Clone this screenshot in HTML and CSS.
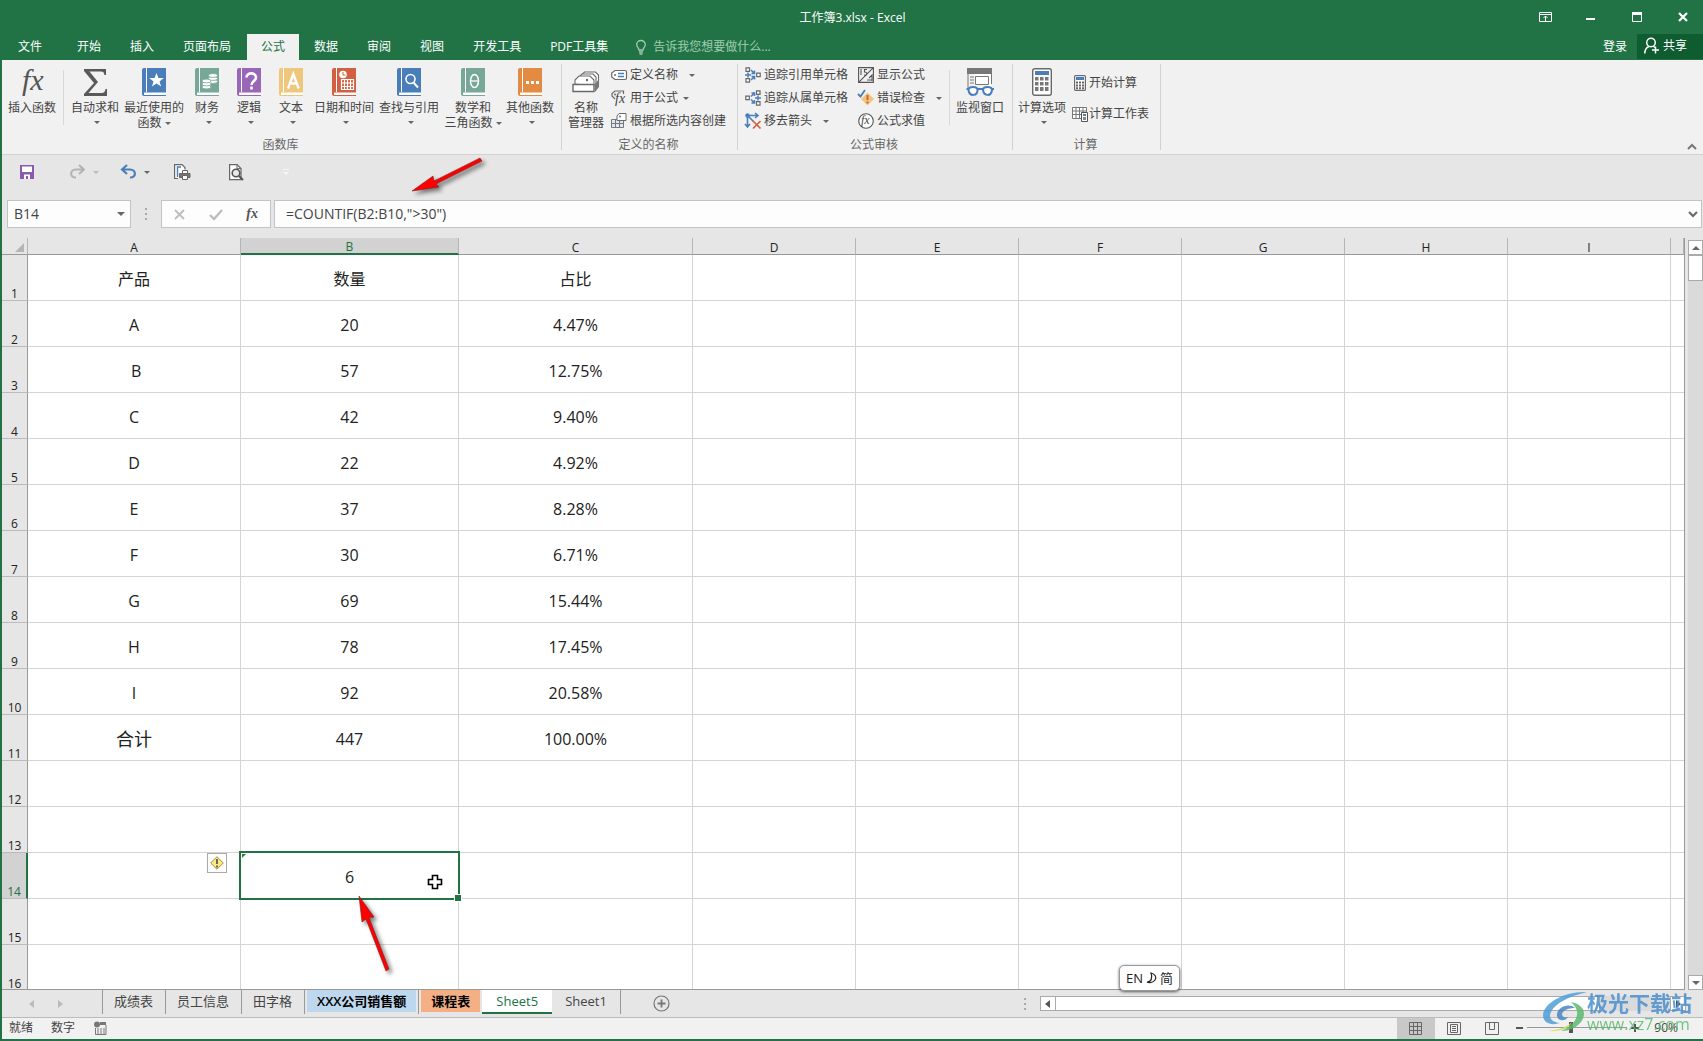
FILE: index.html
```html
<!DOCTYPE html>
<html lang="zh-CN">
<head>
<meta charset="utf-8">
<title>工作簿3.xlsx - Excel</title>
<link rel="stylesheet" href="styles.css">
</head>
<body>
<svg class="defs" width="0" height="0" aria-hidden="true">
  <defs>
    <symbol id="arrow-left-down" viewBox="0 0 76 40">
      <path d="M2 36L23 21L24 26L70 3L72 6L26 29L29 32Z" fill="#f00" stroke="#7a2020" stroke-width=".6"/>
    </symbol>
  </defs>
</svg>
<div class="window">
  <header class="titlebar">
    <span></span>
    <h1 class="title">工作簿3.xlsx - Excel</h1>
    <div class="win-buttons">
      <button class="win-btn" aria-label="功能区显示选项"><svg width="13" height="10"><path d="M.5.5h12v9H.5zM1 2.5h11M6.500 9V4M4.500 6l2-2 2 2" fill="none" stroke="#fff"/></svg></button>
      <button class="win-btn" aria-label="最小化"><svg width="10" height="10"><path d="M0 6h9v2H0z" fill="#fff"/></svg></button>
      <button class="win-btn" aria-label="最大化"><svg width="10" height="10"><path d="M.5.5h9v9h-9z" fill="none" stroke="#fff"/><path d="M0 0h10v3H0z" fill="#fff"/></svg></button>
      <button class="win-btn" aria-label="关闭"><svg width="10" height="10"><path d="M1 1l8 8M9 1l-8 8" stroke="#fff" stroke-width="2.200"/></svg></button>
    </div>
  </header>

  <nav class="tabs">
    <button class="tab tab-file">文件</button>
    <button class="tab">开始</button>
    <button class="tab">插入</button>
    <button class="tab">页面布局</button>
    <button class="tab tab-active">公式</button>
    <button class="tab">数据</button>
    <button class="tab">审阅</button>
    <button class="tab">视图</button>
    <button class="tab">开发工具</button>
    <button class="tab">PDF工具集</button>
    <button class="tab tell-me"><svg width="10" height="15"><path d="M3 10C3 8 .7 7 .7 4.500a4.300 4 0 0 1 8.600 0C9.300 7 7 8 7 10zM3 12h4M3.500 14h3" fill="none" stroke="#a0cdb0" stroke-width="1.300"/></svg>告诉我您想要做什么...</button>
    <span class="grow"></span>
    <button class="tab sign-in">登录</button>
    <button class="tab share"><svg width="15" height="17"><circle cx="7" cy="5.500" r="4.300" fill="none" stroke="#fff" stroke-width="1.500"/><path d="M.8 16.500c0-4 1.700-6 4-7M9 9l2 1.500M11.500 9.500v7M8 13h7" fill="none" stroke="#fff" stroke-width="1.500"/></svg>共享</button>
  </nav>

  <section class="ribbon">
    <div class="group">
      <div class="group-body">
        <button class="big w54"><svg width="36" height="30" class="fx-big"><text x="8" y="22" class="fx-text-big">fx</text></svg><span>插入函数</span></button>
        <i class="inner-rule rule-first"></i>
        <button class="big w54"><svg width="28" height="30"><path d="M3 1h22v6h-1.500C23 4 22 3.500 19 3.500H8.500L17 14 7.500 25H20c3 0 4-1 4.500-4H26v7H3v-2l10-11L3 3z" fill="#595959"/></svg><span>自动求和</span><i class="caret"></i></button>
        <button class="big w64"><svg width="24" height="30"><path d="M2 0H24V28H2Q0 28 0 26V2Q0 0 2 0Z" fill="#4a7ebb"/><path d="M4.500 0V24" stroke="#fff"/><path d="M2 24.500H24V27H2Z" fill="#fff"/><path d="M14.500 5l1.900 5.100h5.400l-4.300 3.300 1.600 5.200-4.600-3.200-4.600 3.200 1.600-5.200-4.300-3.300h5.400z" fill="#fff"/></svg><span>最近使用的</span><span>函数 <i class="caret"></i></span></button>
        <button class="big w42"><svg width="24" height="30"><path d="M2 0H24V28H2Q0 28 0 26V2Q0 0 2 0Z" fill="#76a797"/><path d="M4.500 0V24" stroke="#fff"/><path d="M2 24.500H24V27H2Z" fill="#fff"/><g fill="#fff" stroke="#76a797" stroke-width=".8"><ellipse cx="18" cy="13.500" rx="4.500" ry="1.900"/><ellipse cx="18" cy="10.500" rx="4.500" ry="1.900"/><ellipse cx="18" cy="7.500" rx="4.500" ry="1.900"/><ellipse cx="11.500" cy="19" rx="4.500" ry="1.900"/><ellipse cx="11.500" cy="16" rx="4.500" ry="1.900"/><ellipse cx="11.500" cy="13" rx="4.500" ry="1.900"/></g></svg><span>财务</span><i class="caret"></i></button>
        <button class="big w42"><svg width="24" height="30"><path d="M2 0H24V28H2Q0 28 0 26V2Q0 0 2 0Z" fill="#9a66b8"/><path d="M4.500 0V24" stroke="#fff"/><path d="M2 24.500H24V27H2Z" fill="#fff"/><path d="M9.500 9.500C9.500 4 19 4 19 9.500c0 3.500-4.500 3.500-4.500 7.500M14.500 18.500v3" fill="none" stroke="#fff" stroke-width="2.600"/></svg><span>逻辑</span><i class="caret"></i></button>
        <button class="big w42"><svg width="24" height="30"><path d="M2 0H24V28H2Q0 28 0 26V2Q0 0 2 0Z" fill="#efc77c"/><path d="M4.500 0V24" stroke="#fff"/><path d="M2 24.500H24V27H2Z" fill="#fff"/><path d="M9 20.500L14.300 6 19.600 20.500M10.500 15.500h7.500" fill="none" stroke="#fff" stroke-width="2.400"/></svg><span>文本</span><i class="caret"></i></button>
        <button class="big w64"><svg width="24" height="30"><path d="M2 0H24V28H2Q0 28 0 26V2Q0 0 2 0Z" fill="#d35f42"/><path d="M4.500 0V24" stroke="#fff"/><path d="M2 24.500H24V27H2Z" fill="#fff"/><circle cx="11" cy="6.500" r="3.800" fill="#fff"/><path d="M11 4v3h2.500" fill="none" stroke="#d35f42"/><path d="M9.500 11.500h12v10h-12zM9.500 15h12M9.500 18.500h12M12.500 11v10M15.500 11v10M18.500 11v10" fill="none" stroke="#fff" stroke-width="1.200"/></svg><span>日期和时间</span><i class="caret"></i></button>
        <button class="big w66"><svg width="24" height="30"><path d="M2 0H24V28H2Q0 28 0 26V2Q0 0 2 0Z" fill="#4a7ebb"/><path d="M4.500 0V24" stroke="#fff"/><path d="M2 24.500H24V27H2Z" fill="#fff"/><circle cx="13.500" cy="11" r="4.500" fill="none" stroke="#fff" stroke-width="1.600"/><path d="M16.500 14.500l4.500 5" stroke="#fff" stroke-width="2"/></svg><span>查找与引用</span><i class="caret"></i></button>
        <button class="big w62"><svg width="24" height="30"><path d="M2 0H24V28H2Q0 28 0 26V2Q0 0 2 0Z" fill="#76a797"/><path d="M4.500 0V24" stroke="#fff"/><path d="M2 24.500H24V27H2Z" fill="#fff"/><ellipse cx="13.500" cy="13" rx="4" ry="6.500" fill="none" stroke="#fff" stroke-width="1.500"/><path d="M10 13h7" stroke="#fff" stroke-width="1.300"/></svg><span>数学和</span><span>三角函数 <i class="caret"></i></span></button>
        <button class="big w52"><svg width="24" height="30"><path d="M2 0H24V28H2Q0 28 0 26V2Q0 0 2 0Z" fill="#e38b43"/><path d="M4.500 0V24" stroke="#fff"/><path d="M2 24.500H24V27H2Z" fill="#fff"/><path d="M8 13h3v3H8zM13 13h3v3h-3zM18 13h3v3h-3z" fill="#fff"/></svg><span>其他函数</span><i class="caret"></i></button>
      </div>
      <div class="group-label">函数库</div>
    </div>

    <div class="group">
      <div class="group-body">
        <button class="big w42"><svg width="28" height="30"><g fill="#fff" stroke="#6a6a6a" stroke-width="1.100"><path d="M8.500 11V8l4-4h11l3 3v11"/><path d="M6 13V10l4-4h11l3 3v11"/><path d="M3 16v-4l4-4h11l4 4v6z"/><path d="M1 16.500h21v7H1z" stroke-width="1.400"/></g><circle cx="15" cy="12" r="1.200" fill="#6a6a6a"/><path d="M23 16l4-5v8l-4 5z" fill="#777"/></svg><span>名称</span><span>管理器</span></button>
        <div class="stack stack-names">
          <button class="small"><svg width="16" height="16"><path d="M4 3.500h10q1.500 0 1.500 1.500v6q0 1.500-1.500 1.500H4L.7 10V6z" fill="#fff" stroke="#6a6a6a" stroke-width="1.200"/><circle cx="4" cy="8" r="1" fill="#6a6a6a"/><path d="M7 6.500h6M7 9.500h6" stroke="#4a7ebb" stroke-width="1.300"/></svg>定义名称<i class="caret far"></i></button>
          <button class="small"><svg width="16" height="16"><path d="M4 9L1 6V3.500L4 1h8.500v3" fill="none" stroke="#6a6a6a" stroke-width="1.200"/><circle cx="4" cy="4.500" r="1" fill="#6a6a6a"/><text x="4" y="13" class="fx-text fx-bigger">fx</text></svg>用于公式<i class="caret"></i></button>
          <button class="small"><svg width="16" height="16"><path d="M.5 6.500h12v8H.5zM4.500 6v8M8.500 6v8M1 10.500h11" fill="#dce8f4" stroke="#777"/><path d="M6 3l2-2.500h7v7H6z" fill="#fff" stroke="#6a6a6a"/><circle cx="9" cy="3.500" r="1" fill="#6a6a6a"/></svg>根据所选内容创建</button>
        </div>
      </div>
      <div class="group-label">定义的名称</div>
    </div>

    <div class="group">
      <div class="group-body">
        <div class="stack stack-audit">
          <button class="small"><svg width="16" height="16"><path d="M1 .8h3.500v3.500H1zM1 11.700h3.500v3.500H1zM11.700 6.200h3.500v3.500h-3.500z" fill="#fff" stroke="#666" stroke-width="1.200"/><path d="M0 8h6M3 5.500v5M6 3l3 3M9.500 3.500v3h-3M6 13l3-3M9.500 12.500v-3h-3" fill="none" stroke="#4a7ebb" stroke-width="1.500"/></svg>追踪引用单元格</button>
          <button class="small"><svg width="16" height="16"><path d="M11.500.8H15v3.500h-3.500zM11.500 11.700H15v3.500h-3.500zM.8 6.200h3.500v3.500H.8z" fill="#fff" stroke="#666" stroke-width="1.200"/><path d="M10 8h6M13 5.500v5M6 6.500l3-3M6.500 3h3v3M6 9.500l3 3M6.500 13h3v-3" fill="none" stroke="#4a7ebb" stroke-width="1.500"/></svg>追踪从属单元格</button>
          <button class="small"><svg width="16" height="16"><path d="M2.500 2v12M0 11l2.500 3 2.500-3M2.500 2.500h10M10 0l3 2.500L10 5M2.500 2.500l6 6" fill="none" stroke="#4a7ebb" stroke-width="1.600"/><circle cx="2.500" cy="2.500" r="2.200" fill="#4a7ebb"/><path d="M8 8l7.500 7.500M15.500 8L8 15.500" stroke="#d35f42" stroke-width="1.700"/></svg>移去箭头<i class="caret far"></i></button>
        </div>
        <div class="stack">
          <button class="small"><svg width="16" height="16"><path d="M.6.600h14.800v14.800H.6zM.6 15.400L15.400.6M3 2v6M6 8h2.500q1-3-2-3V2.500H9M9 13h5M11 11l3-3v6" fill="none" stroke="#555" stroke-width="1.100"/></svg>显示公式</button>
          <button class="small"><svg width="16" height="16"><path d="M9.500 2.500l6.500 6.500-6.500 6.500L3 9z" fill="#efc77c"/><path d="M9.500 5v5M9.500 11.500v2" stroke="#d35f42" stroke-width="2"/><path d="M0 4l2.500 2.500L7 0" fill="none" stroke="#4a7ebb" stroke-width="1.800"/></svg>错误检查<i class="caret far"></i></button>
          <button class="small"><svg width="16" height="16"><circle cx="8" cy="8" r="7.300" fill="#fff" stroke="#555" stroke-width="1.100"/><text x="3" y="11" class="fx-text">fx</text></svg>公式求值</button>
        </div>
        <i class="inner-rule"></i>
        <button class="big w54"><svg width="30" height="30"><path d="M2.500 1h24v20" fill="#fff"/><path d="M3 1v21M26.500 1v15" stroke="#777" fill="none"/><path d="M2 0h25v6H2z" fill="#777"/><path d="M10.500 8.500h13v8h-13z" fill="#fff" stroke="#777"/><path d="M5 9h4M5 12h4M5 15h4" stroke="#777"/><path d="M3.500 22c0-4 9-4 9 0 0 6-8 7-9 0zM18 22c0-4 9-4 9 0-1 7-8 6-9 0zM12.500 21h5.500M1.500 21h3M26 21h3" fill="#fff" stroke="#4a7ebb" stroke-width="2"/></svg><span>监视窗口</span></button>
      </div>
      <div class="group-label">公式审核</div>
    </div>

    <div class="group">
      <div class="group-body">
        <button class="big w52"><svg width="20" height="30"><rect x=".7" y=".7" width="18.600" height="26.600" rx="2" fill="#fff" stroke="#6a6a6a" stroke-width="1.400"/><path d="M3 3h14v4H3z" fill="#4a7ebb"/><path d="M3 9h3.500v3.500H3zM8 9h3.500v3.500H8zM13 9h3.500v3.500H13zM3 14h3.500v3.500H3zM8 14h3.500v3.500H8zM13 14h3.500v3.500H13zM3 19h3.500v4H3zM8 19h3.500v4H8zM13 19h3.500v4H13z" fill="#777"/></svg><span>计算选项</span><i class="caret"></i></button>
        <div class="stack stack-calc">
          <button class="small"><svg width="16" height="16"><rect x="2.600" y=".6" width="10.800" height="14.800" rx="1" fill="#fff" stroke="#6a6a6a" stroke-width="1.200"/><path d="M4 2h8v3H4z" fill="#4a7ebb"/><path d="M4 6.500h2v2H4zM7 6.500h2v2H7zM10 6.500h2v2h-2zM4 9.500h2v2H4zM7 9.500h2v2H7zM10 9.500h2v2h-2zM4 12.300h2v2H4zM7 12.300h2v2H7zM10 12.300h2v2h-2z" fill="#666"/></svg>开始计算</button>
          <button class="small"><svg width="16" height="16"><path d="M.5 1.500h14v11H.5zM.5 5h14M.5 8.500h14M4 1.500v11M7.500 1.500v11M11 1.500v11" fill="#fff" stroke="#777"/><path d="M9.500 6.500h6v9h-6z" fill="#fff" stroke="#555"/><path d="M11 8h3v2h-3z" fill="#4a7ebb"/><path d="M11 11h3v3h-3z" fill="#888"/></svg>计算工作表</button>
        </div>
      </div>
      <div class="group-label">计算</div>
    </div>
    <button class="collapse" aria-label="折叠功能区"><svg width="10" height="6"><path d="M1 5l4-4 4 4" fill="none" stroke="#777" stroke-width="2"/></svg></button>
  </section>

  <div class="quick">
    <button class="qbtn" aria-label="保存"><svg width="14" height="14"><path d="M0 0h14v14H0z" fill="#8b5ab0"/><path d="M2 1.500h10V7H2zM4 9.500h6V14H4z" fill="#fff"/><path d="M6 11h2v3H6z" fill="#8b5ab0"/></svg></button>
    <span class="qpair">
      <button class="qbtn" aria-label="重做"><svg width="15" height="14"><path d="M9 0l5 4.500-5 4.500M14 4.500H6C-.5 4.500-.5 13 6 12.500" fill="none" stroke="#b3b3b3" stroke-width="2"/></svg></button>
      <i class="caret caret-light"></i>
    </span>
    <span class="qpair">
      <button class="qbtn" aria-label="撤消"><svg width="15" height="14"><path d="M6 0L1 4.500 6 9M1 4.500h8C15.500 4.500 15.500 13 9 12.500" fill="none" stroke="#4a7ebb" stroke-width="2.200"/></svg></button>
      <i class="caret"></i>
    </span>
    <button class="qbtn q-print" aria-label="快速打印"><svg width="17" height="17"><path d="M4 14.500H.6V.6H8l3 3v2" fill="#fff" stroke="#666" stroke-width="1.200"/><path d="M3.500 13V3H7" fill="none" stroke="#4a7ebb" stroke-width="1.400"/><path d="M8.500 6.500h5v3h-5z" fill="#fff" stroke="#666"/><path d="M5.500 9.500h10.500v4H5.500z" fill="#777" stroke="#666"/><path d="M8.500 11.500h5v4h-5z" fill="#fff" stroke="#666"/></svg></button>
    <button class="qbtn q-preview" aria-label="打印预览"><svg width="15" height="17"><path d="M.6.600H8l4 4v11H.6z" fill="#fff" stroke="#666" stroke-width="1.200"/><path d="M8 .6v4h4" fill="none" stroke="#666"/><circle cx="7" cy="9" r="3.800" fill="#e8e8e8" stroke="#555" stroke-width="1.600"/><path d="M10 12l4 4" stroke="#555" stroke-width="2.200"/></svg></button>
    <svg class="q-more" width="6" height="7"><path d="M0 0h6v1H0zM0 3h6L3 6z" fill="#f6f6f6"/></svg>
  </div>

  <div class="formula-row">
    <div class="name-box">
      <input class="name-input" aria-label="名称框" value="B14">
      <i class="caret caret-wide"></i>
    </div>
    <svg class="dots" width="2" height="12"><path d="M0 0h2v2H0zM0 5h2v2H0zM0 10h2v2H0z" fill="#aaa"/></svg>
    <div class="fx-box">
      <button class="qbtn" aria-label="取消"><svg width="11" height="11"><path d="M1 1l9 9M10 1l-9 9" stroke="#bdbdbd" stroke-width="1.800"/></svg></button>
      <button class="qbtn" aria-label="输入"><svg width="14" height="11"><path d="M1 6l4 4 8-9" fill="none" stroke="#bdbdbd" stroke-width="2.400"/></svg></button>
      <button class="qbtn fx-button" aria-label="插入函数">fx</button>
    </div>
    <div class="formula-box">
      <input class="formula-input" aria-label="编辑栏" value="=COUNTIF(B2:B10,&quot;&gt;30&quot;)">
      <svg width="10" height="6"><path d="M1 1l4 4 4-4" fill="none" stroke="#666" stroke-width="2"/></svg>
      <svg class="pointer pointer-formula" width="76" height="40"><use href="#arrow-left-down"/></svg>
    </div>
  </div>

  <main class="sheet-area">
    <div class="grid-wrap">
      <table class="grid">
        <colgroup><col class="c-head"><col class="c-a"><col class="c-b"><col class="c-c"><col class="c-n"><col class="c-n"><col class="c-n"><col class="c-n"><col class="c-n"><col class="c-n"><col></colgroup>
        <thead><tr><th class="corner"><svg width="9" height="9"><path d="M9 0v9H0z" fill="#b5b5b5"/></svg></th><th>A</th><th class="sel">B</th><th>C</th><th>D</th><th>E</th><th>F</th><th>G</th><th>H</th><th>I</th><th></th></tr></thead>
        <tbody>
          <tr><th>1</th><td>产品</td><td>数量</td><td>占比</td><td></td><td></td><td></td><td></td><td></td><td></td><td></td></tr>
          <tr><th>2</th><td>A</td><td>20</td><td>4.47%</td><td></td><td></td><td></td><td></td><td></td><td></td><td></td></tr>
          <tr><th>3</th><td>&nbsp;B</td><td>57</td><td>12.75%</td><td></td><td></td><td></td><td></td><td></td><td></td><td></td></tr>
          <tr><th>4</th><td>C</td><td>42</td><td>9.40%</td><td></td><td></td><td></td><td></td><td></td><td></td><td></td></tr>
          <tr><th>5</th><td>D</td><td>22</td><td>4.92%</td><td></td><td></td><td></td><td></td><td></td><td></td><td></td></tr>
          <tr><th>6</th><td>E</td><td>37</td><td>8.28%</td><td></td><td></td><td></td><td></td><td></td><td></td><td></td></tr>
          <tr><th>7</th><td>F</td><td>30</td><td>6.71%</td><td></td><td></td><td></td><td></td><td></td><td></td><td></td></tr>
          <tr><th>8</th><td>G</td><td>69</td><td>15.44%</td><td></td><td></td><td></td><td></td><td></td><td></td><td></td></tr>
          <tr><th>9</th><td>H</td><td>78</td><td>17.45%</td><td></td><td></td><td></td><td></td><td></td><td></td><td></td></tr>
          <tr><th>10</th><td>I</td><td>92</td><td>20.58%</td><td></td><td></td><td></td><td></td><td></td><td></td><td></td></tr>
          <tr><th>11</th><td class="total">合计</td><td>447</td><td>100.00%</td><td></td><td></td><td></td><td></td><td></td><td></td><td></td></tr>
          <tr><th>12</th><td></td><td></td><td></td><td></td><td></td><td></td><td></td><td></td><td></td><td></td></tr>
          <tr><th>13</th><td></td><td></td><td></td><td></td><td></td><td></td><td></td><td></td><td></td><td></td></tr>
          <tr><th class="sel">14</th><td></td><td class="active-cell">6
            <button class="error-tag" aria-label="错误检查选项"><svg width="14" height="14"><path d="M7 .7L13.300 7 7 13.300.7 7z" fill="#ffe97a" stroke="#9a8f4a"/><path d="M7 3v5M7 9.500v2" stroke="#666" stroke-width="2"/></svg></button>
            <svg class="flag" width="4" height="4"><path d="M0 0h4L0 4z" fill="#1a8a2a"/></svg>
            <i class="fill-handle"></i>
            <svg class="cross" width="16" height="16"><path d="M5.500 1.500h5v4h4v5h-4v4h-5v-4h-4v-5h4z" fill="#fff" stroke="#000" stroke-width="1.600"/></svg>
            <svg class="pointer pointer-cell" width="36" height="82"><path d="M2 2L17 23L12 23.500L32 75L29 77L9 25L5 28Z" fill="#f00" stroke="#7a2020" stroke-width=".6"/></svg>
          </td><td></td><td></td><td></td><td></td><td></td><td></td><td></td><td></td></tr>
          <tr><th>15</th><td></td><td></td><td></td><td></td><td></td><td></td><td></td><td></td><td></td><td></td></tr>
          <tr><th>16</th><td></td><td></td><td></td><td></td><td></td><td></td><td></td><td></td><td></td><td></td></tr>
        </tbody>
      </table>
    </div>
    <div class="vscroll">
      <button class="sbtn" aria-label="向上滚动"><i class="caret caret-up"></i></button>
      <i class="thumb-v"></i>
      <span class="grow"></span>
      <button class="sbtn" aria-label="向下滚动"><i class="caret caret-wide"></i></button>
    </div>
    <div class="ime">EN <svg width="11" height="12"><path d="M5 1c4 1 6 4 4 7-2 3-6 3-8 2 4 0 6-4 4-9z" fill="none" stroke="#222" stroke-width="1.200"/></svg> 简</div>
  </main>

  <footer class="sheet-bar">
    <span class="sheet-nav"><svg width="5" height="8"><path d="M5 0v8L0 4z" fill="#bbb"/></svg><svg width="5" height="8"><path d="M0 0v8l5-4z" fill="#bbb"/></svg></span>
    <button class="sheet">成绩表</button>
    <button class="sheet">员工信息</button>
    <button class="sheet">田字格</button>
    <button class="sheet sheet-blue"><span>XXX公司销售额</span></button>
    <button class="sheet sheet-orange"><span>课程表</span></button>
    <button class="sheet sheet-active">Sheet5</button>
    <button class="sheet">Sheet1</button>
    <button class="sheet-add" aria-label="新工作表"><svg width="17" height="17"><circle cx="8.500" cy="8.500" r="7.500" fill="none" stroke="#777" stroke-width="1.200"/><path d="M4.500 8.500h8M8.500 4.500v8" stroke="#777" stroke-width="1.800"/></svg></button>
    <span class="grow"></span>
    <svg class="dots" width="2" height="12"><path d="M0 0h2v2H0zM0 5h2v2H0zM0 10h2v2H0z" fill="#aaa"/></svg>
    <div class="hscroll">
      <button class="hbtn" aria-label="向左滚动"><svg width="5" height="8"><path d="M5 0v8L0 4z" fill="#555"/></svg></button>
      <i class="thumb-h"></i>
      <button class="hbtn" aria-label="向右滚动"><svg width="5" height="8"><path d="M0 0v8l5-4z" fill="#555"/></svg></button>
    </div>
  </footer>

  <footer class="status">
    <span>就绪</span><span>数字</span>
    <svg width="14" height="14"><circle cx="4" cy="3.500" r="3" fill="#777"/><path d="M7 1h6v3H7z" fill="#777"/><path d="M2.500 7v6.500h10.500V4" fill="none" stroke="#777"/><path d="M4 8h2M7 8h2M10 8h2M4 10h2M7 10h2M10 10h2M4 12h2M7 12h2M10 12h2" stroke="#777"/></svg>
    <span class="grow"></span>
    <button class="view view-on" aria-label="普通"><svg width="14" height="14"><path d="M.5.500h12v12H.5zM4.500.500v12M8.500.500v12M.5 4.500h12M.5 8.500h12" fill="none" stroke="#666"/></svg></button>
    <button class="view" aria-label="页面布局"><svg width="14" height="14"><path d="M.5.500h13v12H.5zM3.500 2.500h7v8h-7zM5 4.500h4M5 6.500h4M5 8.500h4" fill="none" stroke="#666"/></svg></button>
    <button class="view" aria-label="分页预览"><svg width="14" height="14"><path d="M.5.500h13v12H.5zM4.500.500v7M9.500.500v7M4.500 7.500h5" fill="none" stroke="#666"/></svg></button>
    <div class="zoom">
      <button class="qbtn" aria-label="缩小"><svg width="7" height="8"><path d="M0 3h7v2H0z" fill="#555"/></svg></button>
      <input class="zoom-range" type="range" min="10" max="180" value="84" aria-label="显示比例">
      <button class="qbtn" aria-label="放大"><svg width="8" height="8"><path d="M3 0h2v3h3v2H5v3H3V5H0V3h3z" fill="#555"/></svg></button>
    </div>
    <span class="percent">90%</span>
  </footer>

  <div class="watermark">
    <svg width="48" height="42" viewBox="0 0 48 42">
      <path d="M45 1C22 0 2 12 1 24c0 8 8 11 17 8C10 31 6 27 9 21 13 12 28 5 45 1z" fill="#4f9fd8"/>
      <path d="M33 17c-7-6-19 0-18 8 1 6 9 5 11 1-3 1-6 0-6-3 1-4 7-6 13-6z" fill="#4a86c5"/>
      <path d="M29 11c11 2 17 10 10 20-5 6-12 9-20 9 9-4 15-9 16-16 1-5-2-9-6-13z" fill="#5cba70"/>
      <path d="M6 40c9-1 18-3 24-9-2 6-12 10-24 9z" fill="#d9db4e"/>
    </svg>
    <div><div class="wm-name">极光下载站</div><div class="wm-url">www.xz7.com</div></div>
  </div>
</div>
</body>
</html>
```
FILE: styles.css
```css
* { box-sizing: border-box; }
body {
  margin: 0;
  font: 12px/16px "Open Sans", "Noto Sans CJK SC", sans-serif;
  color: #444;
}
button, input {
  font: inherit;
  color: inherit;
  border: 0;
  padding: 0;
  margin: 0;
  background: none;
}
button { display: flex; align-items: center; justify-content: center; white-space: nowrap; }
input { outline: none; min-width: 0; }
svg { display: block; flex: none; overflow: visible; }
.defs { position: absolute; }
.grow { flex: 1; }

.window {
  position: relative;
  display: flex;
  flex-direction: column;
  height: 100vh;
  border-left: 2px solid #217346;
  border-bottom: 2px solid #217346;
  background: #e6e6e6;
  overflow: hidden;
}

/* small drop-down triangle */
.caret {
  display: inline-block;
  flex: none;
  border: 3px solid transparent;
  border-top-color: #666;
  border-bottom: 0;
}
.caret-light { border-top-color: #bbb; }
.caret-wide { border-width: 4px 4px 0; }
.caret-up { border-width: 0 4px 4px; border-bottom: 4px solid #666; }

/* title bar */
.titlebar {
  display: grid;
  grid-template-columns: 1fr auto 1fr;
  align-items: center;
  height: 34px;
  background: #217346;
  color: #fff;
}
.title { margin: 0; padding-top: 2px; font-size: 12px; font-weight: 400; }
.win-buttons { display: flex; justify-content: flex-end; margin-right: -3px; }
.win-btn { width: 46px; height: 30px; }

/* ribbon tabs */
.tabs { display: flex; height: 26px; background: #217346; color: #fff; }
.tab { padding: 0 14px 1px 15px; }
.tab-file { padding-right: 20px; padding-left: 16px; }
.tab-active { margin-left: 2px; padding-left: 14px; background: #f1f1f1; color: #217346; }
.tell-me { gap: 7px; color: #a0cdb0; padding: 0 14px; }
.sign-in { padding: 0 10px 1px; }
.share { gap: 4px; padding: 0 16px 2px 7px; height: 25px; background: #0e5c2f; }

/* ribbon */
.ribbon {
  display: flex;
  height: 95px;
  padding-top: 4px;
  background: #f1f1f1;
  border-bottom: 1px solid #d2d2d2;
}
.group {
  display: flex;
  flex-direction: column;
  height: 86px;
  padding: 0 5px 0 3px;
  border-right: 1px solid #d2d2d2;
}
.group-body { display: flex; flex: none; height: 73px; }
.group-label { text-align: center; color: #666; }
.big {
  flex-direction: column;
  justify-content: flex-start;
  padding-top: 4px;
  line-height: 15px;
}
.big svg { height: 30px; margin-bottom: 2px; }
.big > .caret { margin: 6px 0 0 3px; }
.big span .caret { vertical-align: 2px; }
.w42 { width: 42px; }
.w52 { width: 52px; }
.w54 { width: 54px; }
.w62 { width: 62px; }
.w64 { width: 64px; }
.w66 { width: 66px; }
.inner-rule { width: 1px; height: 55px; margin: 6px 3px 0; background: #d8d8d8; }
.rule-first { margin: 6px 4px 0; }
.fx-text-big, .fx-text, .fx-button { font-family: "Liberation Serif", serif; font-style: italic; }
.fx-text-big { font-size: 30px; fill: #555; }
.fx-text { font-size: 12px; fill: #444; }
.fx-bigger { font-size: 14px; }
.stack { display: flex; flex-direction: column; padding: 0 4px; }
.stack-names, .stack-audit { margin-right: 2px; }
.stack-calc { padding-top: 4px; margin-right: 2px; }
.stack-calc .small { height: 31px; gap: 1px; }
.small { justify-content: flex-start; height: 23px; gap: 3px; padding-bottom: 1px; }
.small .caret { margin-left: 2px; }
.small .far { margin-left: 8px; }
.collapse { margin: auto 6px 4px auto; }

/* quick access bar */
.quick { display: flex; align-items: center; height: 34px; padding-left: 18px; gap: 36px; }
.qpair { display: flex; align-items: center; gap: 8px; }
.qpair + .qpair { margin-left: -14px; }
.q-print { margin-left: -12px; }
.q-preview { margin-left: 2px; }
.q-more { margin-left: 3px; }

/* name box and formula bar */
.formula-row { display: flex; align-items: center; margin-top: 11px; padding: 0 1px 0 5px; }
.name-box, .fx-box, .formula-box {
  display: flex;
  align-items: center;
  height: 28px;
  border: 1px solid #c3c3c3;
  background: #fdfdfd;
}
.name-box { width: 124px; padding: 0 5px 0 6px; }
.name-input { flex: 1; font-size: 14px; }
.dots { margin: 0 14px; }
.fx-box { width: 110px; justify-content: space-between; padding: 0 12px; }
.fx-button { font-size: 14px; font-weight: 700; color: #555; }
.formula-box { position: relative; flex: 1; margin-left: 3px; padding: 0 3px 0 11px; }
.formula-input { flex: 1; font-size: 14px; }
.pointer { position: absolute; z-index: 2; filter: drop-shadow(3px 3px 2px rgba(0, 0, 0, .5)); pointer-events: none; }
.pointer-formula { left: 135px; top: -46px; }

/* worksheet */
.sheet-area { position: relative; display: flex; flex: 1; min-height: 0; margin-top: 10px; }
.grid-wrap {
  flex: 1;
  min-width: 0;
  overflow: hidden;
  border-right: 1px solid #999;
  border-bottom: 1px solid #999;
}
.grid { width: 100%; table-layout: fixed; border-collapse: separate; border-spacing: 0; color: #222; }
.c-head { width: 26px; }
.c-a { width: 213px; }
.c-b { width: 218px; }
.c-c { width: 234px; }
.c-n { width: 163px; }
.grid th { padding: 0; font-weight: 400; font-size: 12px; background: #e6e6e6; }
.grid thead th {
  height: 17px;
  line-height: 13px;
  padding-top: 3px;
  border-right: 1px solid #b5b5b5;
  border-bottom: 1px solid #999;
}
.grid thead .sel { background: #d2d2d2; color: #217346; border-bottom: 2px solid #217346; padding-top: 2px; }
.corner svg { margin-left: 13px; }
.grid tbody th {
  vertical-align: bottom;
  line-height: 12px;
  border-right: 1px solid #999;
  border-bottom: 1px solid #bbb;
}
.grid tbody .sel { background: #d2d2d2; color: #217346; border-right: 2px solid #217346; }
.grid td {
  height: 46px;
  padding: 2px 0 0;
  text-align: center;
  font-size: 16px;
  line-height: 24px;
  background: #fff;
  border-right: 1px solid #d4d4d4;
  border-bottom: 1px solid #d4d4d4;
}
.grid td:last-child { border-right: 0; }
.grid .total { font-size: 18px; }
.active-cell { position: relative; }
.active-cell::after {
  content: "";
  position: absolute;
  inset: -2px -2px -2px -2px;
  border: 2px solid #217346;
  pointer-events: none;
}
.error-tag {
  position: absolute;
  left: -34px;
  top: 0;
  width: 20px;
  height: 20px;
  border: 1px solid #aaa;
  background: #fff;
}
.flag { position: absolute; left: 1px; top: 1px; }
.fill-handle {
  position: absolute;
  right: -3px;
  bottom: -3px;
  z-index: 1;
  width: 6px;
  height: 6px;
  background: #217346;
  outline: 1px solid #fff;
}
.cross { position: absolute; right: 15px; top: 21px; }
.pointer-cell { left: 116px; top: 41px; }

.vscroll { display: flex; flex-direction: column; width: 15px; margin: 2px 0 0 3px; background: #dadada; }
.sbtn { height: 15px; background: #fff; border: 1px solid #aaa; }
.thumb-v { height: 26px; background: #fff; border: 1px solid #aaa; }

.ime {
  position: absolute;
  right: 523px;
  bottom: -1px;
  display: flex;
  align-items: center;
  gap: 3px;
  height: 26px;
  padding: 0 6px;
  font-size: 13px;
  color: #222;
  background: #fff;
  border: 1px solid #999;
  border-radius: 5px;
  box-shadow: 0 1px 3px rgba(0, 0, 0, .6);
}

/* sheet tabs */
.sheet-bar { display: flex; align-items: center; height: 28px; border-bottom: 1px solid #bbb; }
.sheet-nav { display: flex; gap: 24px; align-self: stretch; align-items: center; width: 100px; padding-left: 27px; }
.sheet {
  position: relative;
  height: 24px;
  padding: 0 12px 1px 11px;
  margin-bottom: 4px;
  font-size: 13px;
  border-left: 1px solid #999;
}
.sheet-blue, .sheet-orange { padding: 0 2px 1px; color: #000; font-weight: 600; }
.sheet-blue span, .sheet-orange span { padding: 3px 10px; }
.sheet-blue span { background: #bdd7ee; }
.sheet-orange span { background: #f4b084; }
.sheet-active { padding: 0 14px; background: #fff; color: #217346; border-left: 0; border-bottom: 2px solid #217346; }
.sheet-active + .sheet { border-left: 0; padding: 0 13px 1px; border-right: 1px solid #999; }
.sheet-add { margin-left: 32px; }
.hscroll {
  display: flex;
  width: 38%;
  height: 15px;
  margin-right: 17px;
  background: #dadada;
}
.hbtn { width: 16px; background: #fff; border: 1px solid #aaa; }
.thumb-h { flex: 1; margin-right: 70px; background: #fff; border: 1px solid #aaa; border-left: 0; }

/* status bar */
.status { display: flex; align-items: center; height: 21px; padding: 0 0 2px 7px; gap: 18px; background: #f1f1f1; }
.view { width: 38px; height: 21px; margin: 0 0 -2px -18px; }
.view-on { background: #c8c8c8; margin-left: 0; }
.zoom { display: flex; align-items: center; gap: 4px; margin-left: -13px; }
.zoom-range {
  appearance: none;
  width: 100px;
  height: 12px;
  background: linear-gradient(#999, #999) center / 100% 1px no-repeat;
}
.zoom-range::-webkit-slider-thumb { appearance: none; width: 4px; height: 11px; background: #555; }
.percent { margin: 0 25px 0 -3px; }

.watermark {
  position: absolute;
  right: 11px;
  bottom: 6px;
  display: flex;
  align-items: center;
  opacity: .85;
  pointer-events: none;
}
.watermark svg { margin-right: -3px; }
.wm-name { font-size: 21px; line-height: 24px; font-weight: 700; color: #4a8fd0; }
.wm-url { font-size: 16px; line-height: 18px; color: #5cba70; }
```
